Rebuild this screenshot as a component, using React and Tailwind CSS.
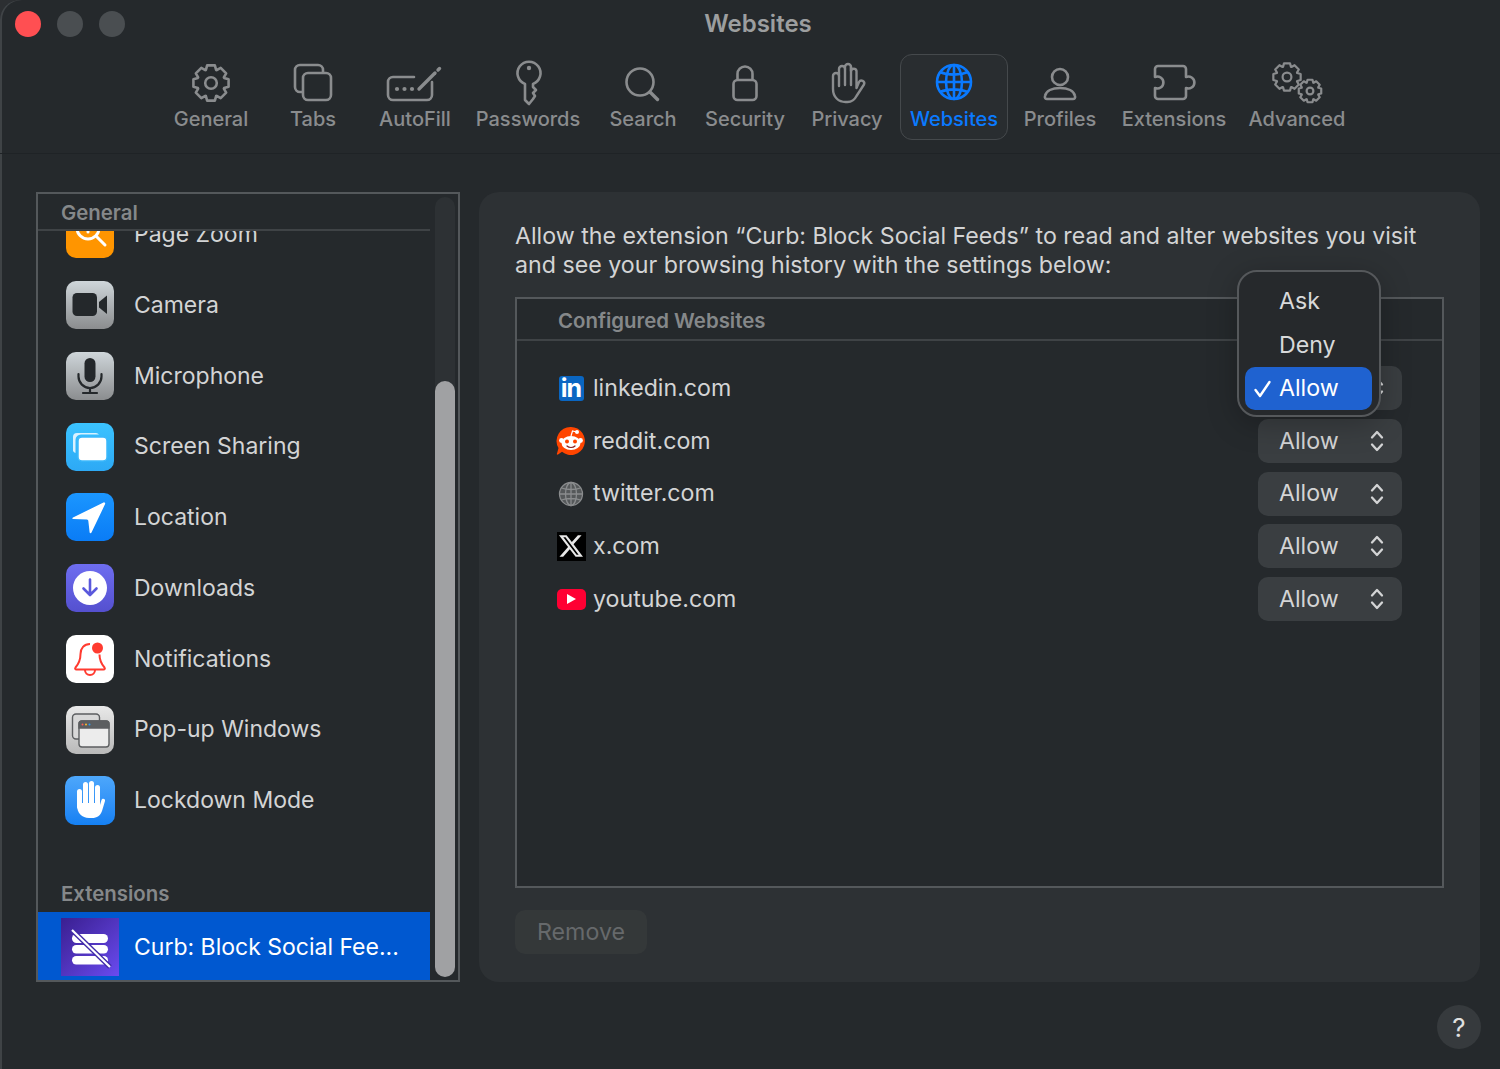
import React from "react";

const gearPath = (cx, cy, R, r, n = 8) => {
  const pts = [];
  for (let i = 0; i < n; i++) {
    const a = (i * 2 * Math.PI) / n - Math.PI / 2;
    const w = (Math.PI / n) * 0.55;
    const g = (Math.PI / n) * 0.95;
    [[r, a - g], [R, a - w], [R, a + w], [r, a + g]].forEach(([rad, t]) => {
      pts.push(`${(cx + rad * Math.cos(t)).toFixed(2)} ${(cy + rad * Math.sin(t)).toFixed(2)}`);
    });
  }
  return "M" + pts.join("L") + "Z";
};

const Gear = ({ cx, cy, R, hole, sw = 2.6 }) => (
  <g strokeWidth={sw} strokeLinejoin="round">
    <path d={gearPath(cx, cy, R, R * 0.78)} />
    <circle cx={cx} cy={cy} r={hole} />
  </g>
);

const Chevrons = ({ className }) => (
  <svg width="14" height="24" viewBox="0 0 14 24" fill="none" stroke="currentColor" strokeWidth="2.3" strokeLinecap="round" strokeLinejoin="round" className={className}>
    <path d="M2 8.500 7 3l5 5.500M2 15.500 7 21l5-5.500" />
  </svg>
);

const toolbarIcons = {
  General: <Gear cx={30} cy={23} R={18} hole={5.8} />,
  Tabs: (
    <g strokeWidth="2.600">
      <path d="M20 32h-3a5 5 0 0 1-5-5V10a5 5 0 0 1 5-5h18a5 5 0 0 1 5 5v3" />
      <rect x="20" y="13" width="28" height="27" rx="5" />
    </g>
  ),
  AutoFill: (
    <g strokeWidth="2.600" strokeLinecap="round">
      <path d="M29 17H8a5 5 0 0 0-5 5v13a5 5 0 0 0 5 5h34a5 5 0 0 0 5-5V22" />
      <path d="M34 29 50 13" strokeWidth="3.400" />
      <path d="M53 10l1.500-1.500" strokeWidth="3.400" />
      <circle cx="12" cy="29" r="2.100" fill="currentColor" stroke="none" />
      <circle cx="19.500" cy="29" r="2.100" fill="currentColor" stroke="none" />
      <circle cx="27" cy="29" r="2.100" fill="currentColor" stroke="none" />
    </g>
  ),
  Passwords: (
    <g strokeWidth="2.600" strokeLinejoin="round" transform="translate(16 0)">
      <path d="M11 24A11.500 11.500 0 1 1 19 24V27L22 30L19 33L21 36L19 39L15 44L11 40Z" />
      <circle cx="15" cy="8" r="2.200" fill="currentColor" stroke="none" />
    </g>
  ),
  Search: (
    <g strokeWidth="2.600" strokeLinecap="round">
      <circle cx="27" cy="22" r="13.500" />
      <path d="M37 32l7.500 7.500" strokeWidth="3.400" />
    </g>
  ),
  Security: (
    <g strokeWidth="2.600">
      <rect x="18.500" y="20" width="23" height="20" rx="4" />
      <path d="M22.500 20v-6a7.500 7.500 0 0 1 15 0v6" />
    </g>
  ),
  Privacy: (
    <g strokeWidth="2.400" strokeLinecap="round" strokeLinejoin="round">
      <path d="M16 16a3 3 0 0 1 6 0V9a3 3 0 0 1 6 0V7a3 3 0 0 1 6 0V11a2.800 2.800 0 0 1 5.500 0V28l2.500-6a2.800 2.800 0 0 1 5 2.500L39.500 36c-2 4-5 6-9 6h-2c-7 0-12.500-5-12.500-13z" />
      <path d="M22 16V26M28 9V25M34 7V25" />
    </g>
  ),
  Websites: (
    <g strokeWidth="2.600">
      <circle cx="30" cy="22" r="17" />
      <ellipse cx="30" cy="22" rx="8" ry="17" />
      <path d="M30 5v34M13 22h34M16 12c8 3.500 20 3.500 28 0M16 32c8-3.500 20-3.500 28 0" />
    </g>
  ),
  Profiles: (
    <g strokeWidth="2.600">
      <circle cx="30" cy="17" r="8" />
      <path d="M15 36C16 31 22 28 30 28C38 28 44 31 45 36C45.500 38 44.500 39 43 39H17C15.500 39 14.500 38 15 36Z" />
    </g>
  ),
  Extensions: (
    <g strokeWidth="2.600" strokeLinejoin="round" transform="translate(1 0)">
      <path d="M13 6H38a3 3 0 0 1 3 3V17A6 6 0 1 1 41 28V36a3 3 0 0 1-3 3H13a3 3 0 0 1-3-3V28A6 6 0 1 0 10 17V9a3 3 0 0 1 3-3Z" />
    </g>
  ),
  Advanced: (
    <g>
      <Gear cx={20} cy={17} R={14} hole={4.400} sw={2.200} />
      <Gear cx={43} cy={31} R={11.500} hole={3.400} sw={2.200} />
    </g>
  ),
};

const tabs = [
  { name: "General", w: "w-[102px]" },
  { name: "Tabs", w: "w-[102px]" },
  { name: "AutoFill", w: "w-[102px]" },
  { name: "Passwords", w: "w-[124px]" },
  { name: "Search", w: "w-[106px]" },
  { name: "Security", w: "w-[98px]" },
  { name: "Privacy", w: "w-[106px]" },
  { name: "Websites", w: "w-[108px]", active: true },
  { name: "Profiles", w: "w-[104px]" },
  { name: "Extensions", w: "w-[124px]" },
  { name: "Advanced", w: "w-[122px]" },
];

const IconBox = ({ className = "", children }) => (
  <div className={`w-12 h-12 rounded-[10px] overflow-hidden flex items-center justify-center shrink-0 ${className}`}>{children}</div>
);

const grayBox = "bg-linear-to-b from-[#cfd6da] to-[#8b8d8f]";

const sideItems = [
  {
    name: "Page Zoom",
    icon: (
      <IconBox className="bg-[#ff9500]">
        <svg width="48" height="48" viewBox="0 0 48 48" fill="none" stroke="#fff" strokeWidth="3" strokeLinecap="round">
          <circle cx="22" cy="18" r="11" />
          <path d="M30 26l9 9M22 13v9M17.500 18h9" />
        </svg>
      </IconBox>
    ),
  },
  {
    name: "Camera",
    icon: (
      <IconBox className={grayBox}>
        <svg width="48" height="48" viewBox="0 0 48 48" fill="#24282b">
          <rect x="6.500" y="12" width="24.500" height="23" rx="4.500" />
          <path d="M33 21l8-6.500v18.500l-8-6.500z" />
        </svg>
      </IconBox>
    ),
  },
  {
    name: "Microphone",
    icon: (
      <IconBox className={grayBox}>
        <svg width="48" height="48" viewBox="0 0 48 48" fill="none" stroke="#24282b" strokeWidth="2.200" strokeLinecap="round">
          <rect x="18.500" y="6" width="11" height="24" rx="5.500" fill="#24282b" stroke="none" />
          <path d="M12.500 22v2.500a11.500 11.500 0 0 0 23 0V22M24 36v5M17 41h14" />
        </svg>
      </IconBox>
    ),
  },
  {
    name: "Screen Sharing",
    icon: (
      <IconBox className="bg-linear-to-b from-[#3bc3ff] to-[#2da9f5]">
        <svg width="48" height="48" viewBox="0 0 48 48" fill="#fff">
          <path d="M7 28V14a4 4 0 0 1 4-4h19a4 4 0 0 1 3 1.500H15a5.500 5.500 0 0 0-5.500 5.500v13A4 4 0 0 1 7 28z" fill="#d8f1ff" />
          <rect x="12" y="14" width="29" height="24" rx="4" stroke="#3bb8fb" strokeWidth="1.500" />
        </svg>
      </IconBox>
    ),
  },
  {
    name: "Location",
    icon: (
      <IconBox className="bg-linear-to-b from-[#1b96ff] to-[#0a7cf6]">
        <svg width="48" height="48" viewBox="0 0 48 48" fill="#fff">
          <path d="M7 24.500 37.500 9.500a1.200 1.200 0 0 1 1.600 1.600L25.500 39.500c-.6 1.200-1.800 1-1.900-.3l-1.300-11.500a1.500 1.500 0 0 0-1.300-1.300L7.300 26c-1.300-.2-1.400-1-.3-1.500z" />
        </svg>
      </IconBox>
    ),
  },
  {
    name: "Downloads",
    icon: (
      <IconBox className="bg-linear-to-b from-[#6e6df0] to-[#5550cf]">
        <svg width="48" height="48" viewBox="0 0 48 48" fill="none">
          <circle cx="24" cy="24" r="17" fill="#fff" />
          <path d="M24 15.500v15M17.500 24.500l6.500 6.500 6.500-6.500" stroke="#5a58dc" strokeWidth="2.600" strokeLinecap="round" strokeLinejoin="round" />
        </svg>
      </IconBox>
    ),
  },
  {
    name: "Notifications",
    icon: (
      <IconBox className="bg-white">
        <svg width="48" height="48" viewBox="0 0 48 48" fill="none" stroke="#ff3b30" strokeWidth="2" strokeLinejoin="round">
          <path d="M24 9c-6 0-9.500 4.500-9.500 10 0 7-2 10-5 13.500-.8 1-.3 2 1 2h27c1.300 0 1.800-1 1-2-3-3.500-5-6.500-5-13" />
          <path d="M19 35c0 3 2.200 5 5 5s5-2 5-5" />
          <circle cx="31.500" cy="13" r="5.500" fill="#ff3b30" stroke="none" />
        </svg>
      </IconBox>
    ),
  },
  {
    name: "Pop-up Windows",
    icon: (
      <IconBox className="bg-linear-to-b from-[#e9e9e9] to-[#b9b9b9]">
        <svg width="48" height="48" viewBox="0 0 48 48" fill="none" stroke="#5c5e60" strokeWidth="1.400">
          <rect x="6.500" y="8" width="27" height="25" rx="3.500" fill="#d8d8d8" />
          <rect x="13" y="15" width="30" height="26" rx="3" fill="#ececec" />
          <path d="M13 18a3 3 0 0 1 3-3h24a3 3 0 0 1 3 3v4H13z" fill="#5c5e60" />
          <circle cx="16.500" cy="18.500" r="1" fill="#ff5f57" stroke="none" />
          <circle cx="20" cy="18.500" r="1" fill="#febc2e" stroke="none" />
          <circle cx="23.500" cy="18.500" r="1" fill="#2a9df4" stroke="none" />
        </svg>
      </IconBox>
    ),
  },
  {
    name: "Lockdown Mode",
    icon: (
      <IconBox className="bg-linear-to-b from-[#4da7fb] to-[#1480f3] w-[50px] h-[49px]">
        <svg width="48" height="48" viewBox="0 0 48 48" fill="#fff">
          <rect x="11" y="13" width="5" height="20" rx="2.500" />
          <rect x="17" y="6" width="5" height="24" rx="2.500" />
          <rect x="23" y="5" width="5" height="26" rx="2.500" />
          <rect x="29" y="9" width="5" height="22" rx="2.500" />
          <path d="M11 27h23v2l1.500-5c.7-2 4-1.500 3.500 1L36 35c-1.500 4.500-5 7-10 7h-3c-7 0-12-5-12-13z" />
        </svg>
      </IconBox>
    ),
  },
];

const sites = [
  {
    name: "linkedin.com",
    icon: (
      <div className="w-[25px] h-[25px] bg-[#0a66c2] rounded-[3px] flex items-end justify-center">
        <span className="text-white font-bold text-[25px] leading-[25px] tracking-[-1px]">in</span>
      </div>
    ),
  },
  {
    name: "reddit.com",
    icon: (
      <svg width="30" height="30" viewBox="0 0 30 30">
        <path d="M15 1a14 14 0 1 1-9 24.800L2 28.500c-1 .5-1.500-.3-1-1L2.500 22A14 14 0 0 1 15 1z" fill="#ff4500" />
        <ellipse cx="15" cy="17" rx="9.500" ry="7" fill="#fff" />
        <circle cx="5.500" cy="14.500" r="2.400" fill="#fff" />
        <circle cx="24.500" cy="14.500" r="2.400" fill="#fff" />
        <circle cx="11" cy="15.500" r="2" fill="#ff4500" />
        <circle cx="19" cy="15.500" r="2" fill="#ff4500" />
        <path d="M11 20c2 2 6 2 8 0" stroke="#882222" strokeWidth="1.200" fill="none" strokeLinecap="round" />
        <path d="M15 10l1.500-5 4 1" stroke="#fff" strokeWidth="1.200" fill="none" />
        <circle cx="21" cy="6" r="2" fill="#fff" />
      </svg>
    ),
  },
  {
    name: "twitter.com",
    icon: (
      <svg width="26" height="26" viewBox="0 0 26 26" fill="none" stroke="#8a8c8e" strokeWidth="1.300">
        <circle cx="13" cy="13" r="11.500" fill="#55585a" />
        <ellipse cx="13" cy="13" rx="5.500" ry="11.500" />
        <path d="M13 1.500v23M1.500 13h23M3.500 7c5 2 14 2 19 0M3.500 19c5-2 14-2 19 0" />
      </svg>
    ),
  },
  {
    name: "x.com",
    icon: (
      <div className="w-[29px] h-[29px] bg-black flex items-center justify-center">
        <svg width="24" height="24" viewBox="0 0 24 24" fill="#e8e8e8">
          <path d="M18.901 1.153h3.680l-8.040 9.190L24 22.846h-7.406l-5.800-7.584-6.638 7.584H.474l8.600-9.830L0 1.154h7.594l5.243 6.932ZM17.610 20.644h2.039L6.486 3.240H4.298Z" />
        </svg>
      </div>
    ),
  },
  {
    name: "youtube.com",
    icon: (
      <div className="w-[29px] h-[21px] bg-[#ff0033] rounded-[5px] flex items-center justify-center">
        <svg width="10" height="10" viewBox="0 0 10 10" fill="#fff"><path d="M1 0l9 5-9 5z" /></svg>
      </div>
    ),
  },
];

const SiteRow = ({ site }) => (
  <div className="h-[52.7px] flex items-center">
    <div className="w-[30px] h-[30px] flex items-center justify-center shrink-0">{site.icon}</div>
    <span className="ml-[7px] text-[23.2px] text-[#d3d4d5]">{site.name}</span>
    <div className="ml-auto w-[144px] h-[44px] rounded-[10px] bg-[#3a3e41] flex items-center justify-between pl-[21px] pr-[18px] text-[#d3d4d5] text-[23.2px]">
      <span>Allow</span>
      <Chevrons />
    </div>
  </div>
);

export default function App() {
  return (
    <div className="w-[1500px] h-[1069px] bg-[#2c2f32]">
      <div className="relative w-[1500px] h-[1069px] overflow-hidden bg-[#25292c] rounded-tl-[20px] shadow-[inset_2px_0_0_#3f4346] font-['Inter','Liberation_Sans',sans-serif]">
        <header className="border-b border-[#1f2326] h-[154px] flex flex-col">
          <div className="h-[54px] flex items-start">
            <div className="w-[141px] pl-[15px] pt-[11px] flex gap-[16px] shrink-0">
              <span className="w-[26px] h-[26px] rounded-full bg-[#ff4f52]" />
              <span className="w-[26px] h-[26px] rounded-full bg-[#4a4e51]" />
              <span className="w-[26px] h-[26px] rounded-full bg-[#4a4e51]" />
            </div>
            <div className="flex-1 mr-[125px] text-center text-[24px] leading-[48px] font-semibold text-[#9c9e9f]">Websites</div>
          </div>
          <nav className="flex justify-center pl-[18px]">
            {tabs.map((t) => (
              <div
                key={t.name}
                className={`${t.w} h-[86px] shrink-0 flex flex-col items-center rounded-[12px] ${
                  t.active ? "border border-[#45494c] bg-[#292d30] text-[#0a7aff] pt-[5px]" : "text-[#8a8c8e] pt-[6px]"
                }`}
              >
                <svg width="60" height="46" viewBox="0 0 60 46" fill="none" stroke="currentColor" className="shrink-0">
                  {toolbarIcons[t.name]}
                </svg>
                <span className="text-[20px] font-medium leading-[26px] whitespace-nowrap">{t.name}</span>
              </div>
            ))}
          </nav>
        </header>

        <main className="flex gap-[19px] pl-[36px] pr-[20px] pt-[38px]">
          <aside className="relative w-[424px] h-[790px] shrink-0 border-2 border-[#54585b] flex">
            <div className="w-[392px] shrink-0 flex flex-col pt-[5px] overflow-hidden">
              {sideItems.map((it) => (
                <div key={it.name} className="h-[70.75px] shrink-0 flex items-center pl-[28px]">
                  <div className="w-[48px] flex justify-center">{it.icon}</div>
                  <span className="ml-[20px] text-[23px] text-[#d3d4d5] whitespace-nowrap">{it.name}</span>
                </div>
              ))}
              <div className="h-[76px] shrink-0 flex items-end pl-[23px] pb-[2px] text-[20.4px] font-semibold text-[#85888a]">Extensions</div>
              <div className="h-[70px] shrink-0 bg-[#0058d0] flex items-center pl-[23px]">
                <div className="w-[58px] h-[58px] shrink-0 bg-linear-to-br from-[#3a1f90] to-[#6a4bf0]">
                  <svg width="58" height="58" viewBox="0 0 58 58" fill="#fff">
                    <rect x="11" y="16" width="36" height="9" rx="4.500" />
                    <rect x="11" y="27" width="36" height="8.500" rx="4.200" />
                    <rect x="11" y="38" width="36" height="8.500" rx="4.200" />
                    <path d="M11 12 49 49" stroke="#3f2aa8" strokeWidth="5" />
                    <path d="M11 12 49 49" stroke="#fff" strokeWidth="2.200" />
                  </svg>
                </div>
                <span className="ml-[15px] text-[23px] text-white whitespace-nowrap">Curb: Block Social Fee...</span>
              </div>
            </div>
            <div className="absolute left-0 top-0 w-[392px] h-[37px] bg-[#25292c] border-b-2 border-[#3f4346] pl-[23px] text-[20.4px] leading-[38px] font-semibold text-[#85888a]">General</div>
            <div className="ml-[5px] w-[20px] my-[3px] rounded-full bg-[#2d3134] flex flex-col justify-end">
              <div className="h-[596px] rounded-full bg-[#a0a1a3]" />
            </div>
          </aside>

          <section className="flex-1 min-w-0 h-[790px] rounded-[20px] bg-[#2d3134] pl-[36px] pr-[36px] pt-[30px]">
            <p className="text-[23.2px] leading-[29px] text-[#d3d4d5] whitespace-nowrap">
              Allow the extension “Curb: Block Social Feeds” to read and alter websites you visit
              <br />
              and see your browsing history with the settings below:
            </p>
            <div className="mt-[17px] h-[591px] border-2 border-[#54585b] bg-[#25292c]">
              <div className="h-[42px] border-b-2 border-[#3f4346] pl-[41px] text-[20.4px] leading-[43px] font-semibold text-[#85888a]">Configured Websites</div>
              <div className="pt-[21px] pl-[39px] pr-[40px]">
                {sites.map((s) => (
                  <SiteRow key={s.name} site={s} />
                ))}
              </div>
            </div>
            <div className="mt-[22px] w-[132px] h-[44px] rounded-[10px] bg-[#343839] flex items-center justify-center text-[23.2px] text-[#66696b]">Remove</div>
          </section>
        </main>

        <div className="flex justify-end pr-[19px] mt-[23px]">
          <div className="w-[44px] h-[44px] rounded-full bg-[#363a3d] flex items-center justify-center text-[26px] text-[#e0e0e0]">?</div>
        </div>

        <div className="absolute left-[1237px] top-[270px] w-[144px] h-[147px] rounded-[20px] border-2 border-[#55585b] bg-[#26292c] shadow-[0_6px_30px_rgba(0,0,0,0.25)] pl-[6px] pr-[7px] pt-[7px] flex flex-col text-[23.2px] text-[#d8d9da]">
          <div className="h-[44px] shrink-0 pl-[34px] flex items-center">Ask</div>
          <div className="h-[44px] shrink-0 pl-[34px] flex items-center">Deny</div>
          <div className="h-[43px] shrink-0 rounded-[10px] bg-[#1f62d0] text-white flex items-center pl-[8px]">
            <svg width="20" height="20" viewBox="0 0 20 20" fill="none" stroke="#fff" strokeWidth="2.400" strokeLinecap="round" strokeLinejoin="round" className="shrink-0">
              <path d="M2.500 11l4.500 6L16.500 3" />
            </svg>
            <span className="ml-[6px]">Allow</span>
          </div>
        </div>
      </div>
    </div>
  );
}
